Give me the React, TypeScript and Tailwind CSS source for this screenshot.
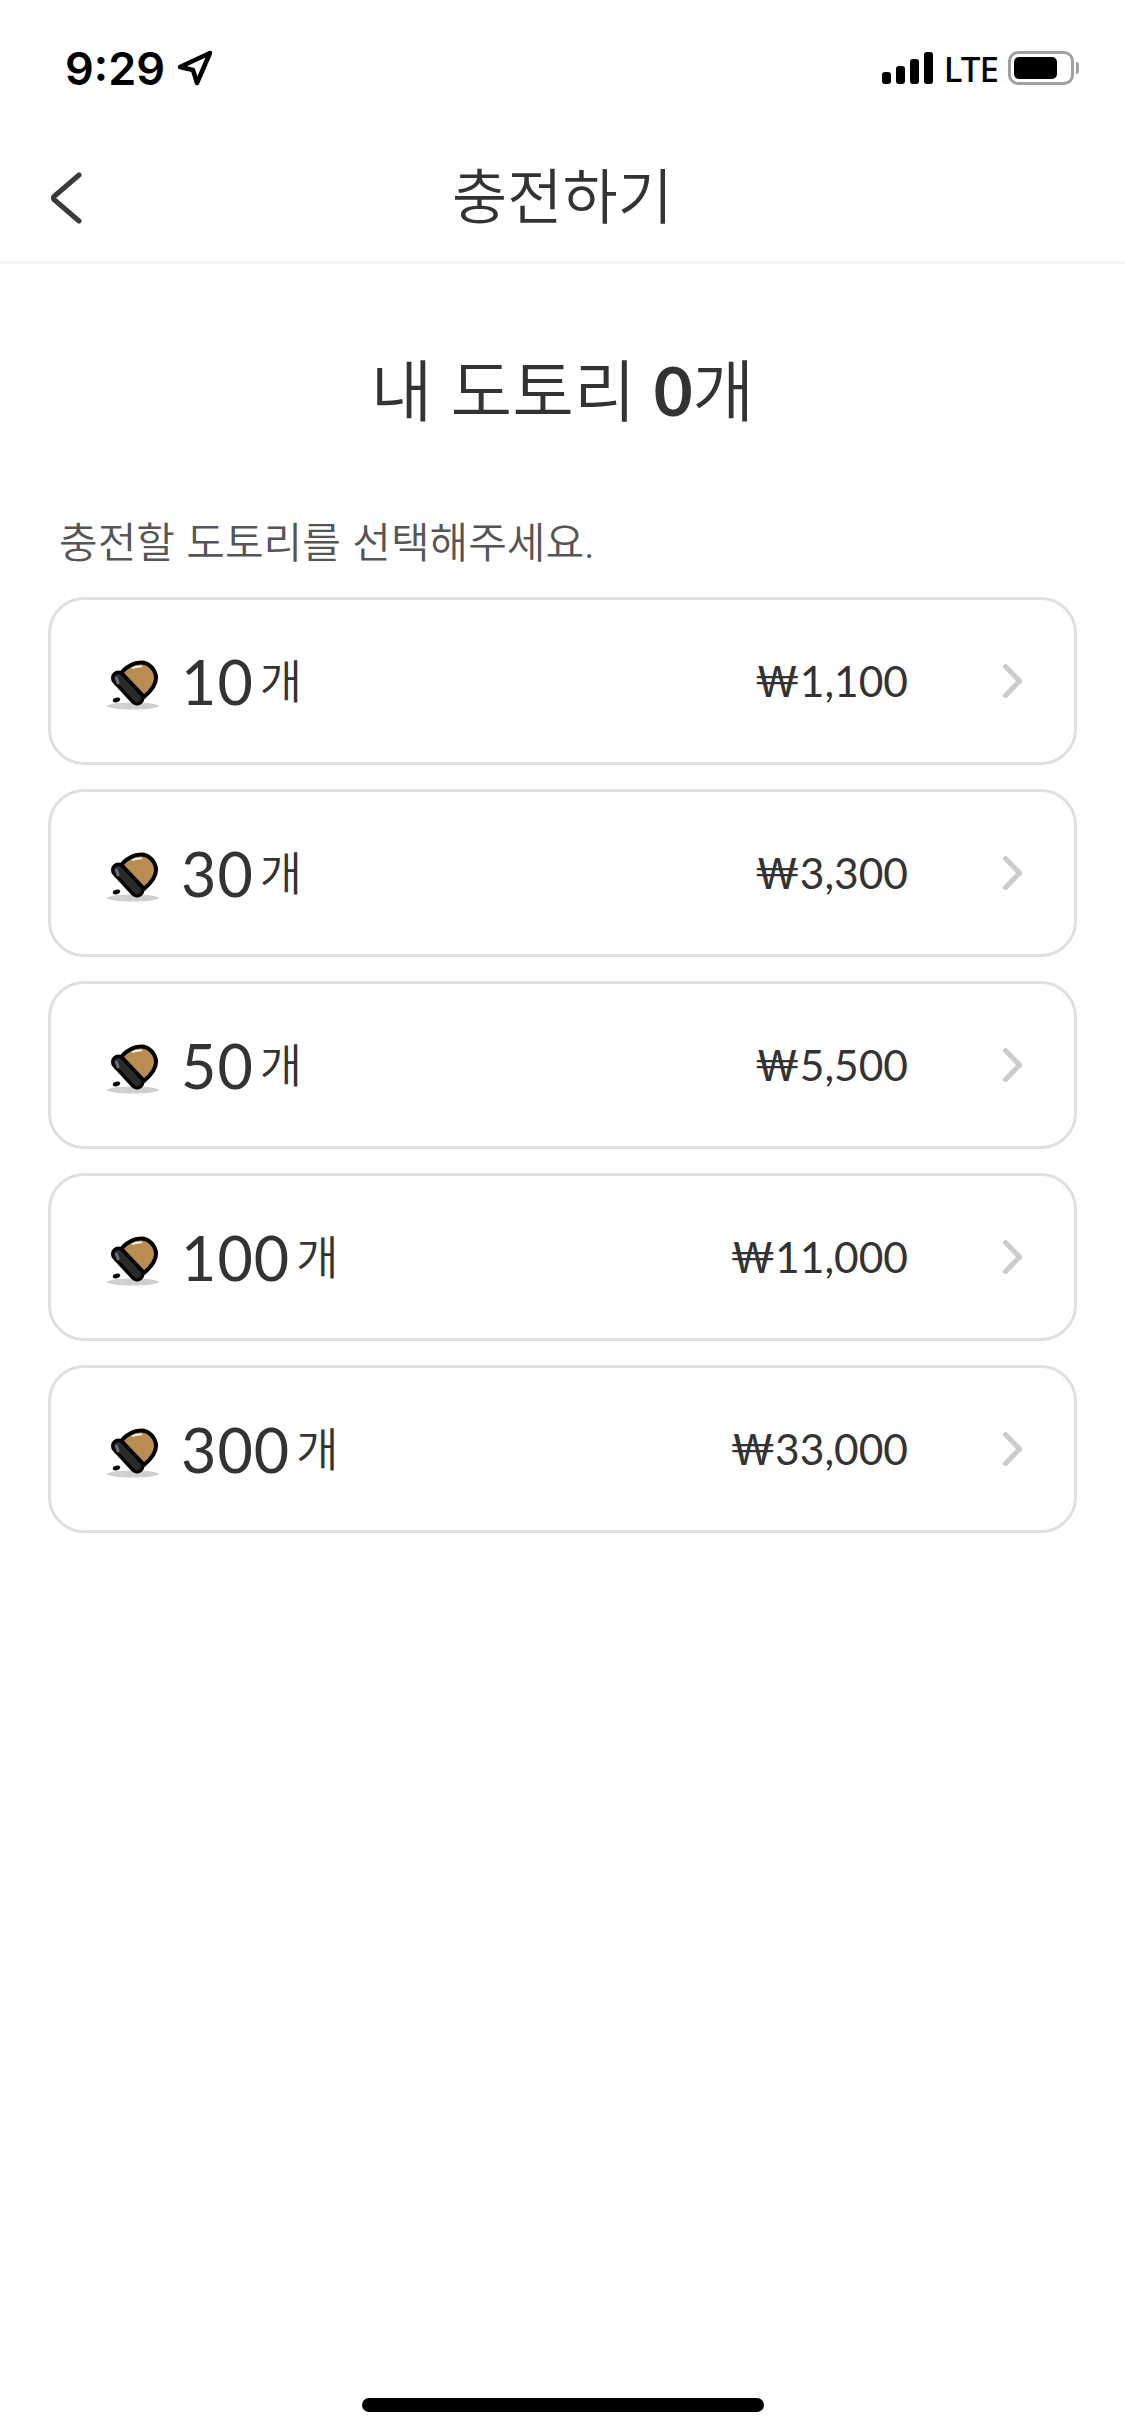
import React from "react";

const FONT = "font-['Lato','Noto_Sans_CJK_KR',sans-serif]";

function Acorn() {
  return (
    <svg width="54" height="50" viewBox="0 0 54 50" className="mt-[8px] shrink-0">
      <ellipse cx="27" cy="46" rx="26" ry="3.5" fill="#cfcfcf" />
      <ellipse cx="10.5" cy="40" rx="3.8" ry="2.2" fill="#0a0a0a" transform="rotate(-15 10.5 40)" />
      <path d="M15 13 C21 6 28 2.5 35 2.5 C43 2.5 50 10 50 18 C50 25 45 31 38 37 Z" fill="#b98c50" stroke="#000" strokeWidth="4" strokeLinejoin="round" />
      <path d="M27 8 Q30 6.3 35 6.5" fill="none" stroke="#fff" strokeWidth="2" strokeLinecap="round" />
      <line x1="12.5" y1="18" x2="31" y2="38" stroke="#000" strokeWidth="15" strokeLinecap="round" />
      <line x1="12.5" y1="18" x2="31" y2="38" stroke="#2a2a2a" strokeWidth="8" strokeLinecap="round" />
      <line x1="10.5" y1="18" x2="12" y2="23" stroke="#6e6e6e" strokeWidth="3" strokeLinecap="round" />
    </svg>
  );
}

function Row({ n, price }: { n: string; price: string }) {
  return (
    <div className="flex h-[168px] items-center rounded-[36px] border-[3px] border-[#e0e0e0] pl-[55px] pr-[52px]">
      <Acorn />
      <div className="ml-[21px] flex items-center">
        <span className="text-[61px] leading-none tracking-[1px] text-[#333]">{n}</span>
        <span className="ml-[6px] text-[46px] font-[350] leading-none text-[#333]">개</span>
      </div>
      <span className="ml-auto text-[42.5px] leading-none text-[#333]">{price}</span>
      <svg width="20" height="38" viewBox="0 0 20 38" className="ml-[94px]" fill="none">
        <path d="M3.5 4.5 L17.5 19 L3.5 33.5" stroke="#cccccc" strokeWidth="5" strokeLinecap="round" strokeLinejoin="round" />
      </svg>
    </div>
  );
}

export default function App() {
  return (
    <div className={`flex h-[2436px] w-[1125px] flex-col bg-white ${FONT}`}>
      <div className="flex h-[132px] items-center justify-between pl-[65px] pr-[43px] pt-[4px]">
        <div className="flex items-center gap-[12px]">
          <span className="font-['Inter',sans-serif] text-[45px] font-semibold leading-none text-black">9:29</span>
          <svg width="36" height="36" viewBox="0 0 36 36" fill="none">
            <path d="M3 17 L33 3 L20 33 L16 20 Z" stroke="#000" strokeWidth="4.5" strokeLinejoin="round" />
          </svg>
        </div>
        <div className="mr-[3px] flex items-center gap-[10px]">
          <svg width="52" height="32" viewBox="0 0 52 32" fill="#000">
            <rect x="0" y="20" width="9" height="12" rx="3" />
            <rect x="14" y="14" width="9" height="18" rx="3" />
            <rect x="28" y="7" width="9" height="25" rx="3" />
            <rect x="42" y="0" width="9" height="32" rx="3" />
          </svg>
          <span className="font-['Noto_Sans',sans-serif] text-[35px] font-medium leading-none tracking-[-1px] text-black">LTE</span>
          <div className="flex items-center gap-[2px]">
            <div className="flex h-[34px] w-[66px] items-center rounded-[10px] border-[3px] border-[#a0a0a0] p-[3px]">
              <div className="h-full w-[43px] rounded-[5px] bg-black" />
            </div>
            <div className="h-[12px] w-[3px] rounded-r-full bg-[#a0a0a0]" />
          </div>
        </div>
      </div>
      <div className="relative flex h-[132px] items-center justify-center border-b-[3px] border-[#f5f5f5] pb-[2px]">
        <svg width="32" height="52" viewBox="0 0 32 52" fill="none" className="absolute left-[50px] top-[40px]">
          <path d="M29 3 L4 24.5 Q3 26 4 27.5 L29 49" stroke="#3a3a3a" strokeWidth="5" strokeLinecap="round" strokeLinejoin="round" />
        </svg>
        <span className="text-[60px] font-[350] leading-none text-[#333]">충전하기</span>
      </div>
      <div className="mt-[93px] text-center text-[67px] font-[350] leading-none text-[#333]">
        내 도토리 <span className="font-bold">0</span>개
      </div>
      <div className="ml-[59px] mt-[97px] text-[42px] font-[350] leading-none text-[#555]">충전할 도토리를 선택해주세요.</div>
      <div className="mx-[48px] mt-[34px] flex flex-col gap-[24px]">
        <Row n="10" price="₩1,100" />
        <Row n="30" price="₩3,300" />
        <Row n="50" price="₩5,500" />
        <Row n="100" price="₩11,000" />
        <Row n="300" price="₩33,000" />
      </div>
      <div className="mt-auto mb-[24px] h-[14px] w-[402px] self-center rounded-full bg-black" />
    </div>
  );
}
